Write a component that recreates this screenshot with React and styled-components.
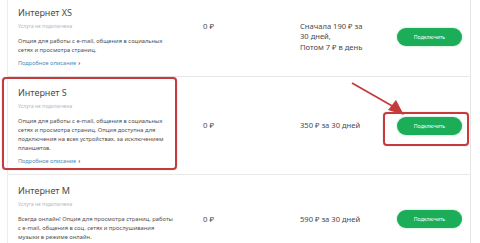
import React from "react";
import styled, { createGlobalStyle } from "styled-components";

const GlobalStyle = createGlobalStyle`
  html, body { margin: 0; padding: 0; background: #ffffff; }
  body { font-family: "Noto Sans", "Liberation Sans", sans-serif; color: #3a3a3a; }
`;

const Page = styled.div`
  position: relative;
  width: 480px;
  height: 243px;
  overflow: hidden;
  background: #ffffff;
`;

const Card = styled.div`
  margin: -3px 0 0 7px;
  width: 464px;
  box-sizing: border-box;
  border-left: 1px solid #ececec;
  border-right: 1px solid #e6e6e6;
`;

const Row = styled.div`
  display: flex;
  align-items: center;
  border-bottom: 1px solid #e8e8e8;
`;

const Info = styled.div`
  width: 195px;
  box-sizing: border-box;
  padding: 10px 0 9px 10px;
  display: flex;
  flex-direction: column;
`;

const Title = styled.div`
  font-size: 9px;
  line-height: 12px;
  color: #4a4a4a;
  white-space: nowrap;
`;

const Status = styled.div`
  margin-top: 3px;
  font-size: 5px;
  line-height: 8px;
  color: #b8b8b8;
  white-space: nowrap;
`;

const Desc = styled.div`
  margin-top: 7px;
  font-size: 5.8px;
  line-height: 9px;
  color: #505050;
  white-space: nowrap;
`;

const More = styled.a`
  margin-top: 4px;
  font-size: 5.6px;
  line-height: 8px;
  color: #4a8bb8;
  white-space: nowrap;
  text-decoration: none;
  span { color: #1d5d8c; font-weight: 700; margin-left: 2px; }
`;

const PriceGroup = styled.div`
  display: flex;
  align-items: flex-start;
`;

const Zero = styled.div`
  width: 97px;
  font-size: 7.8px;
  line-height: 11px;
  color: #4a4a4a;
`;

const PriceText = styled.div`
  width: 97px;
  font-size: 7.6px;
  line-height: 10.5px;
  color: #4a4a4a;
  white-space: nowrap;
`;

const Button = styled.button`
  width: 65px;
  height: 18px;
  border: none;
  border-radius: 9px;
  background: #1bad58;
  box-shadow: 0 0 2px rgba(27, 173, 88, 0.5);
  color: #fff;
  font-family: inherit;
  font-size: 5.2px;
  padding: 0;
`;

const Mark = styled.div`
  position: absolute;
  box-sizing: border-box;
  border: 2px solid #c53b3b;
  border-radius: 4px;
  box-shadow: 0 0 1px rgba(150, 40, 40, 0.6);
`;

const Arrow = styled.svg`
  position: absolute;
  left: 0;
  top: 0;
`;

const rows = [
  {
    title: "Интернет XS",
    desc: ["Опция для работы с e-mail, общения в социальных", "сетях и просмотра страниц."],
    price: ["Сначала 190 ₽ за", "30 дней,", "Потом 7 ₽ в день"],
  },
  {
    title: "Интернет S",
    desc: [
      "Опция для работы с e-mail, общения в социальных",
      "сетях и просмотра страниц. Опция доступна для",
      "подключения на всех устройствах, за исключением",
      "планшетов.",
    ],
    price: ["350 ₽ за 30 дней"],
  },
  {
    title: "Интернет M",
    desc: [
      "Всегда онлайн! Опция для просмотра страниц, работы",
      "с e-mail, общения в соц. сетях и прослушивания",
      "музыки в режиме онлайн.",
    ],
    price: ["590 ₽ за 30 дней"],
  },
];

export default function App() {
  return (
    <>
      <GlobalStyle />
      <Page>
        <Card>
          {rows.map((r) => (
            <Row key={r.title}>
              <Info>
                <Title>{r.title}</Title>
                <Status>Услуга не подключена</Status>
                <Desc>
                  {r.desc.map((l, i) => (
                    <div key={i}>{l}</div>
                  ))}
                </Desc>
                <More href="#">
                  Подробное описание<span>›</span>
                </More>
              </Info>
              <PriceGroup>
                <Zero>0 ₽</Zero>
                <PriceText>
                  {r.price.map((l, i) => (
                    <div key={i}>{l}</div>
                  ))}
                </PriceText>
              </PriceGroup>
              <Button>Подключить</Button>
            </Row>
          ))}
        </Card>
        <Mark style={{ left: 2, top: 77, width: 175, height: 93 }} />
        <Mark style={{ left: 383, top: 112, width: 86, height: 34 }} />
        <Arrow width="480" height="243" viewBox="0 0 480 243">
          <line x1="352" y1="83" x2="394" y2="107" stroke="#c53b3b" strokeWidth="1.8" />
          <polygon points="404,115 388,110 396,100" fill="#c53b3b" />
        </Arrow>
      </Page>
    </>
  );
}
